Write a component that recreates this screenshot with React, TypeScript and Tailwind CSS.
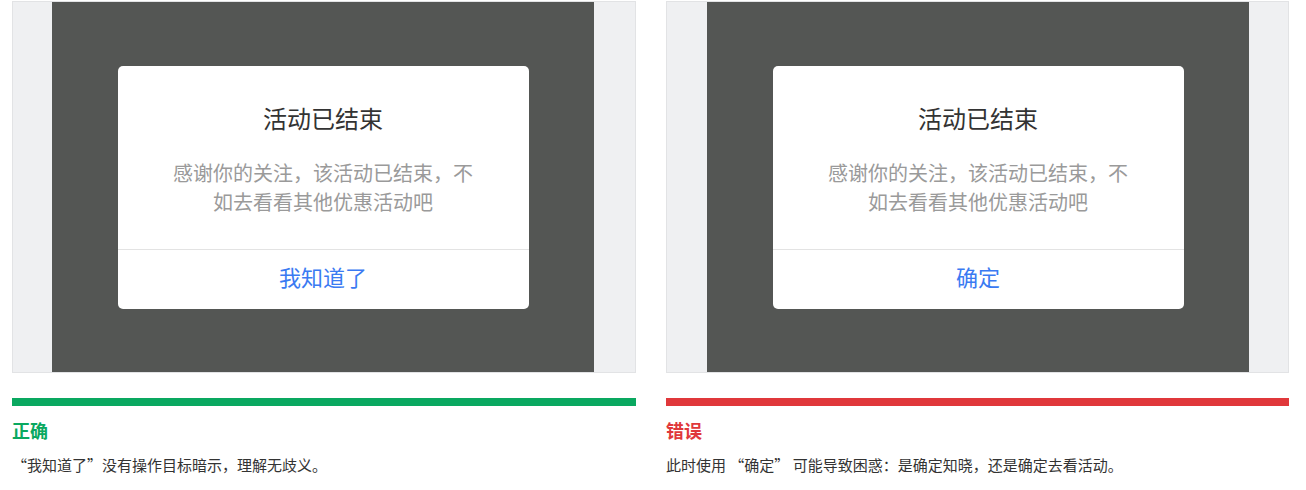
type Example = {
  action: string;
  label: string;
  labelClass: string;
  barClass: string;
  note: string;
};

const examples: Example[] = [
  {
    action: "我知道了",
    label: "正确",
    labelClass: "text-[#0aa860]",
    barClass: "bg-[#0aa860]",
    note: "“我知道了”没有操作目标暗示，理解无歧义。",
  },
  {
    action: "确定",
    label: "错误",
    labelClass: "text-[#e0383b]",
    barClass: "bg-[#e0383b]",
    note: "此时使用 “确定” 可能导致困惑：是确定知晓，还是确定去看活动。",
  },
];

function Dialog({ action }: { action: string }) {
  return (
    <div className="w-[411px] h-[243px] bg-white rounded-[5px] flex flex-col">
      <div className="flex-1 flex flex-col items-center pt-[36px]">
        <h3 className="text-[24px] leading-[32px] text-[#333]">活动已结束</h3>
        <p className="mt-[24px] text-[20px] leading-[29px] text-[#9a9a9a] text-center">
          感谢你的关注，该活动已结束，不
          <br />
          如去看看其他优惠活动吧
        </p>
      </div>
      <div className="h-[60px] pb-[5px] border-t border-[#e3e3e3] flex items-center justify-center text-[22px] text-[#3a7af2]">
        {action}
      </div>
    </div>
  );
}

function Card({ item, first }: { item: Example; first: boolean }) {
  return (
    <div>
      <div className="h-[372px] border border-[#e2e3e5] bg-[#eff0f2] flex">
        <div
          className={`w-[542px] bg-[#545654] flex items-center justify-center ${
            first ? "ml-[39px]" : "ml-[40px]"
          }`}
        >
          <Dialog action={item.action} />
        </div>
      </div>
      <div className={`mt-[25px] h-[8px] ${item.barClass}`} />
      <div className={`mt-[12px] text-[18px] leading-[24px] font-bold ${item.labelClass}`}>
        {item.label}
      </div>
      <p className="mt-[13px] text-[15px] leading-[20px] text-[#333]">{item.note}</p>
    </div>
  );
}

export default function App() {
  return (
    <div className="w-[1306px] h-[490px] bg-white pt-[1px] pl-[12px] font-['Noto_Sans_CJK_SC',sans-serif]">
      <div className="grid grid-cols-[624px_623px] gap-[30px]">
        {examples.map((item, i) => (
          <Card key={item.label} item={item} first={i === 0} />
        ))}
      </div>
    </div>
  );
}
